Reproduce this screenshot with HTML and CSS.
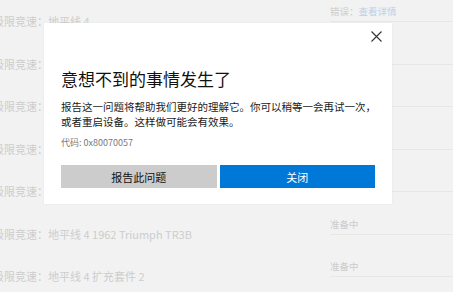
FILE: index.html
```
<!DOCTYPE html>
<html lang="zh-CN">
<head>
<meta charset="utf-8">
<link rel="stylesheet" href="styles.css">
</head>
<body>
<div class="list">
  <div class="row"><div class="name">极限竞速：地平线 4</div><div class="status"><span class="st-text">错误：<span class="link">查看详情</span></span><span class="track"></span></div></div>
  <div class="row"><div class="name">极限竞速：地平线 4 终极版</div><div class="status"><span class="st-text">准备中</span><span class="track"></span></div></div>
  <div class="row"><div class="name">极限竞速：地平线 4 狂飙迷城</div><div class="status"><span class="st-text">准备中</span><span class="track"></span></div></div>
  <div class="row"><div class="name">极限竞速：地平线 4 扩充套件 1</div><div class="status"><span class="st-text">准备中</span><span class="track"></span></div></div>
  <div class="row"><div class="name">极限竞速：地平线 4 乐高赛车</div><div class="status"><span class="st-text">准备中</span><span class="track"></span></div></div>
  <div class="row"><div class="name">极限竞速：地平线 4 1962 Triumph TR3B</div><div class="status"><span class="st-text">准备中</span><span class="track"></span></div></div>
  <div class="row"><div class="name">极限竞速：地平线 4 扩充套件 2</div><div class="status"><span class="st-text">准备中</span><span class="track"></span></div></div>
</div>

<div class="dialog" role="dialog">
  <button class="close" aria-label="关闭">
    <svg width="11" height="11" viewBox="0 0 11 11"><path d="M0.5 0.5 L10.5 10.5 M10.5 0.5 L0.5 10.5" stroke="#333" stroke-width="1.1" fill="none"/></svg>
  </button>
  <h1 class="title">意想不到的事情发生了</h1>
  <p class="message">报告这一问题将帮助我们更好的理解它。你可以稍等一会再试一次，<br>或者重启设备。这样做可能会有效果。</p>
  <p class="code">代码: 0x80070057</p>
  <div class="actions">
    <button class="btn btn-secondary">报告此问题</button>
    <button class="btn btn-primary">关闭</button>
  </div>
</div>
</body>
</html>
```
FILE: styles.css
```
html, body {
  margin: 0;
  padding: 0;
}
body {
  width: 453px;
  height: 292px;
  overflow: hidden;
  background: #f2f2f2;
  font-family: "Noto Sans", "Noto Sans CJK SC", sans-serif;
  position: relative;
}
.list {
  display: flex;
  flex-direction: column;
  margin-left: -7px;
}
.row {
  height: 42.5px;
  display: flex;
  align-items: center;
}
.name {
  flex: 1;
  font-size: 11px;
  color: #cdcdcd;
  white-space: nowrap;
  font-family: "Noto Sans CJK SC", sans-serif;
}
.status {
  width: 123px;
  align-self: stretch;
  display: flex;
  flex-direction: column;
  padding-top: 5px;
  box-sizing: border-box;
}
.st-text {
  font-size: 9.5px;
  line-height: 12px;
  color: #cccccc;
  font-family: "Noto Sans CJK SC", sans-serif;
}
.link {
  color: #bcd0e8;
}
.track {
  height: 1px;
  margin-top: 4px;
  background: #e7e7e7;
}
.dialog {
  position: absolute;
  left: 44px;
  top: 23px;
  width: 348px;
  height: 181px;
  box-sizing: border-box;
  background: #ffffff;
  padding: 44px 17px 16px;
  box-shadow: 0 0 2px rgba(0,0,0,0.06);
  font-family: "Noto Sans CJK SC", sans-serif;
  display: flex;
  flex-direction: column;
}
.close {
  position: absolute;
  top: 8px;
  right: 10px;
  width: 11px;
  height: 11px;
  padding: 0;
  border: 0;
  background: none;
  display: flex;
}
.title {
  margin: 0;
  font-size: 17px;
  line-height: 24px;
  font-weight: 400;
  color: #111;
}
.message {
  margin: 7.5px 0 0;
  font-size: 10.5px;
  line-height: 15px;
  color: #1a1a1a;
  white-space: nowrap;
}
.code {
  margin: 8.5px 0 0;
  font-size: 9px;
  line-height: 12px;
  color: #7a7a7a;
}
.actions {
  margin-top: 16px;
  display: grid;
  grid-template-columns: 1fr 1fr;
  gap: 3px;
}
.btn {
  height: 23px;
  border: 0;
  padding: 0;
  font-family: "Noto Sans CJK SC", sans-serif;
  font-size: 11px;
}
.btn-secondary {
  background: #cccccc;
  color: #111;
}
.btn-primary {
  background: #0078d7;
  color: #ffffff;
}
```
